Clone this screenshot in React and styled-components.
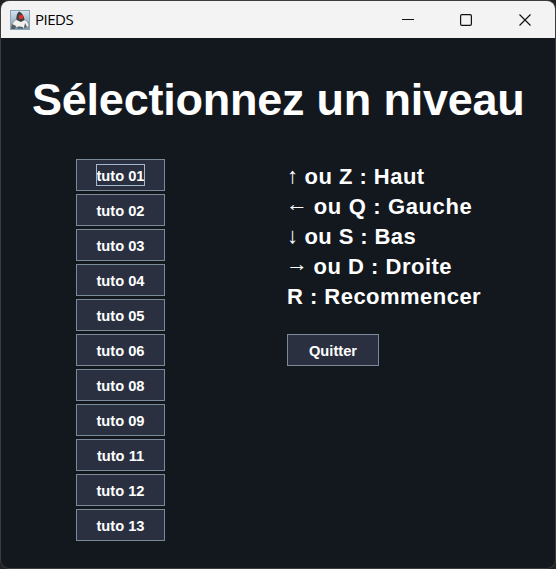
import React from 'react';
import styled, { createGlobalStyle } from 'styled-components';

const GlobalStyle = createGlobalStyle`
  * { box-sizing: border-box; }
  body { margin: 0; background: #242122; overflow: hidden; }
`;

const Window = styled.div`
  width: 556px;
  height: 569px;
  display: flex;
  flex-direction: column;
  overflow: hidden;
  border: 1px solid #3d3b3d;
  border-radius: 9px;
  background: #13181f;
  color: #fff;
  font-family: "Liberation Sans", Arial, sans-serif;
`;

const TitleBar = styled.header`
  display: flex;
  align-items: center;
  flex: none;
  height: 37px;
  padding-left: 9px;
  padding-right: 1px;
  background: #f3f3f3;
  color: #000;
`;

const AppName = styled.span`
  flex: 1;
  margin-left: 5px;
  padding-bottom: 2px;
  font: 15px/20px "Open Sans", "Noto Sans", sans-serif;
  letter-spacing: -0.5px;
`;

const Control = styled.span`
  display: flex;
  align-items: center;
  justify-content: center;
  width: 58.5px;
  height: 37px;
`;

const Heading = styled.h1`
  flex: none;
  margin: 36px 0 0 31px;
  font-size: 45px;
  line-height: 52px;
  font-weight: bold;
  white-space: nowrap;
  letter-spacing: -0.23px;
`;

const Content = styled.main`
  display: flex;
  margin-top: 33px;
  padding-left: 75px;
`;

const Levels = styled.nav`
  display: flex;
  flex-direction: column;
  gap: 3px;
  width: 90px;
  margin-right: 121px;
`;

const GameButton = styled.button`
  display: flex;
  align-items: center;
  justify-content: center;
  width: ${(p) => p.$width}px;
  height: 32px;
  padding: 0;
  border: 1px solid #7a8a99;
  border-radius: 0;
  background: #2a3040;
  color: #fff;
  font: bold 14.67px/20px "Liberation Sans", Arial, sans-serif;
`;

const Label = styled.span`
  display: flex;
  justify-content: center;
  width: ${(p) => p.$width}px;
  height: 20px;
  padding-top: 1px;
  white-space: pre;
  outline: ${(p) => (p.$focused ? '1px solid #a3b8cc' : 'none')};
`;

const Side = styled.section`
  display: flex;
  flex-direction: column;
`;

const Legend = styled.div`
  margin: 3px 0 22px;
  font-size: 22px;
  line-height: 30px;
  font-weight: bold;
  white-space: pre;
`;

const KeyLine = styled.div`
  height: 30px;
  letter-spacing: ${(p) => p.$tracking}px;
`;

const Arrow = styled.span`
  display: inline-block;
  width: ${(p) => (p.$wide ? 20 : 11)}px;
  text-indent: ${(p) => (p.$wide ? -1 : 0)}px;
  vertical-align: ${(p) => (p.$wide ? 3 : 1)}px;
  font-size: 22px;
  line-height: 16px;
  font-family: "Liberation Sans", sans-serif;
  font-weight: normal;
  letter-spacing: 0;
`;

const Duke = () => (
  <svg width="20" height="20" viewBox="0 0 20 20">
    <defs>
      <linearGradient id="sky" x2="0" y2="1">
        <stop stopColor="#d9e6ee" />
        <stop offset="1" stopColor="#7592aa" />
      </linearGradient>
    </defs>
    <rect x=".5" y=".5" width="19" height="19" fill="url(#sky)" stroke="#8aa3b6" />
    <path d="M7 9 4 11 1.5 15l2 3 4-3M13 9l4 2 2 4-2 3-4-3" fill="#eff0ee" stroke="#858d92" strokeWidth=".7" />
    <path d="M7 10 6 17l4-1 4 2 1-3-2-6Z" fill="#f2f1ee" />
    <path d="M9 1.500c3 1 5 4.500 5.500 8.500L11 12l-4.500-2C6 7 7 3 9 1.500Z" fill="#3b4044" />
    <circle cx="11" cy="7" r="2.300" fill="#e22d28" />
    <path d="M2 14l4 2-1 3H1ZM15 13l2 4-3 1ZM8 17h5v1.500H7Z" fill="#555d62" />
  </svg>
);

const levels = ['01', '02', '03', '04', '05', '06', '08', '09', '11', '12', '13'];
const keys = [
  { arrow: '↑', text: ' ou Z : Haut', tracking: 0.47 },
  { arrow: '←', text: ' ou Q : Gauche', wide: true, tracking: 0.64 },
  { arrow: '↓', text: ' ou S : Bas', tracking: 0.4 },
  { arrow: '→', text: ' ou D : Droite', wide: true, tracking: 0.5 },
  { text: 'R : Recommencer', tracking: 0.47 },
];

export default function App() {
  return (
    <>
      <GlobalStyle />
      <Window>
        <TitleBar>
          <Duke />
          <AppName>PIEDS</AppName>
          <Control><svg width="12" height="12"><path d="M0 5.500h12" stroke="#111" /></svg></Control>
          <Control><svg width="12" height="12"><rect x=".6" y=".6" width="10.8" height="10.8" rx="1.4" fill="none" stroke="#111" strokeWidth="1.2" /></svg></Control>
          <Control><svg width="12" height="12"><path d="m.5.5 11 11m0-11-11 11" stroke="#111" strokeWidth="1.15" /></svg></Control>
        </TitleBar>
        <Heading>Sélectionnez un niveau</Heading>
        <Content>
          <Levels>
            {levels.map((n, i) => (
              <GameButton key={n} $width={89}><Label $width={47} $focused={i === 0}>{`tuto ${n}`}</Label></GameButton>
            ))}
          </Levels>
          <Side>
            <Legend>
              {keys.map((k) => (
                <KeyLine key={k.text} $tracking={k.tracking}>{k.arrow && <Arrow $wide={k.wide}>{k.arrow}</Arrow>}{k.text}</KeyLine>
              ))}
            </Legend>
            <GameButton $width={92}><Label $width={50}>Quitter</Label></GameButton>
          </Side>
        </Content>
      </Window>
    </>
  );
}
